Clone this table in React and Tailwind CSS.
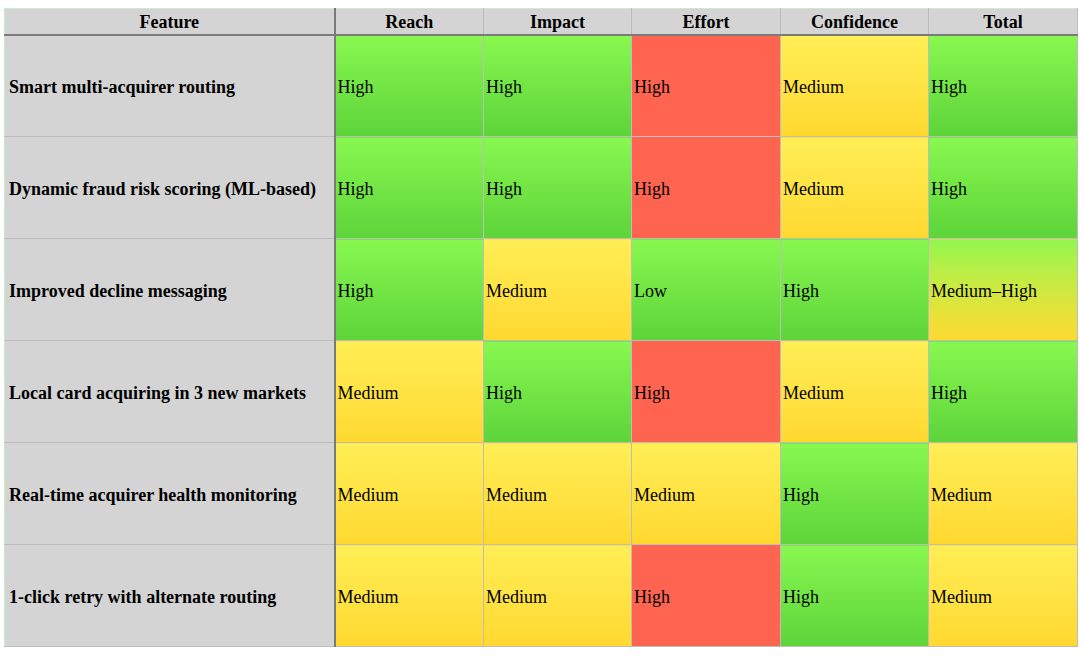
import React from 'react';

const cols = ['Reach', 'Impact', 'Effort', 'Confidence', 'Total'];

const rows = [
  ['Smart multi-acquirer routing', 'High', 'High', 'High:bad', 'Medium', 'High'],
  ['Dynamic fraud risk scoring (ML-based)', 'High', 'High', 'High:bad', 'Medium', 'High'],
  ['Improved decline messaging', 'High', 'Medium', 'Low', 'High', 'Medium–High'],
  ['Local card acquiring in 3 new markets', 'Medium', 'High', 'High:bad', 'Medium', 'High'],
  ['Real-time acquirer health monitoring', 'Medium', 'Medium', 'Medium', 'High', 'Medium'],
  ['1-click retry with alternate routing', 'Medium', 'Medium', 'High:bad', 'High', 'Medium'],
];

// colour of a score cell
const tone = (v) => {
  if (v === 'High:bad') return 'bg-[#ff6450]';
  if (v === 'Medium') return 'bg-gradient-to-b from-[#ffee55] to-[#ffd82e]';
  if (v === 'Medium–High') return 'bg-gradient-to-b from-[#90f64e] to-[#fed930]';
  return 'bg-gradient-to-b from-[#88f850] to-[#5dd43a]';
};

export default function App() {
  return (
    <div className="bg-white min-h-screen pt-2 pl-1 font-['Liberation_Serif',serif] text-black">
      <table className="w-[1074px] table-fixed border-collapse border border-[#c6efc6] text-[18px]">
        <colgroup>
          <col className="w-[330px]" />
          <col className="w-[149px]" />
          <col className="w-[148px]" />
          <col className="w-[149px]" />
          <col className="w-[148px]" />
          <col />
        </colgroup>
        <thead>
          <tr className="h-[26px] bg-[#d4d4d4]">
            <th className="border-l border-[#c6efc6] border-b-2 border-b-[#7a7a7a] border-r-2 border-r-[#7a7a7a] font-bold leading-none pt-[2px]">
              Feature
            </th>
            {cols.map((c) => (
              <th key={c} className="border-x border-x-[#bdbdbd] border-b-2 border-b-[#7a7a7a] border-t border-t-[#c6efc6] font-bold leading-none pt-[2px]">
                {c}
              </th>
            ))}
          </tr>
        </thead>
        <tbody>
          {rows.map(([feature, ...vals], i) => (
            <tr key={i} className="h-[102px]">
              <td className="bg-[#d4d4d4] border-b border-b-[#bdbdbd] border-r-2 border-r-[#7a7a7a] pl-1 pt-1 font-bold">
                {feature}
              </td>
              {vals.map((v, j) => (
                <td key={j} className={`${tone(v)} border border-[#bdbdbd] pl-[2px] pt-1`}>
                  {v.replace(':bad', '')}
                </td>
              ))}
            </tr>
          ))}
        </tbody>
      </table>
    </div>
  );
}
